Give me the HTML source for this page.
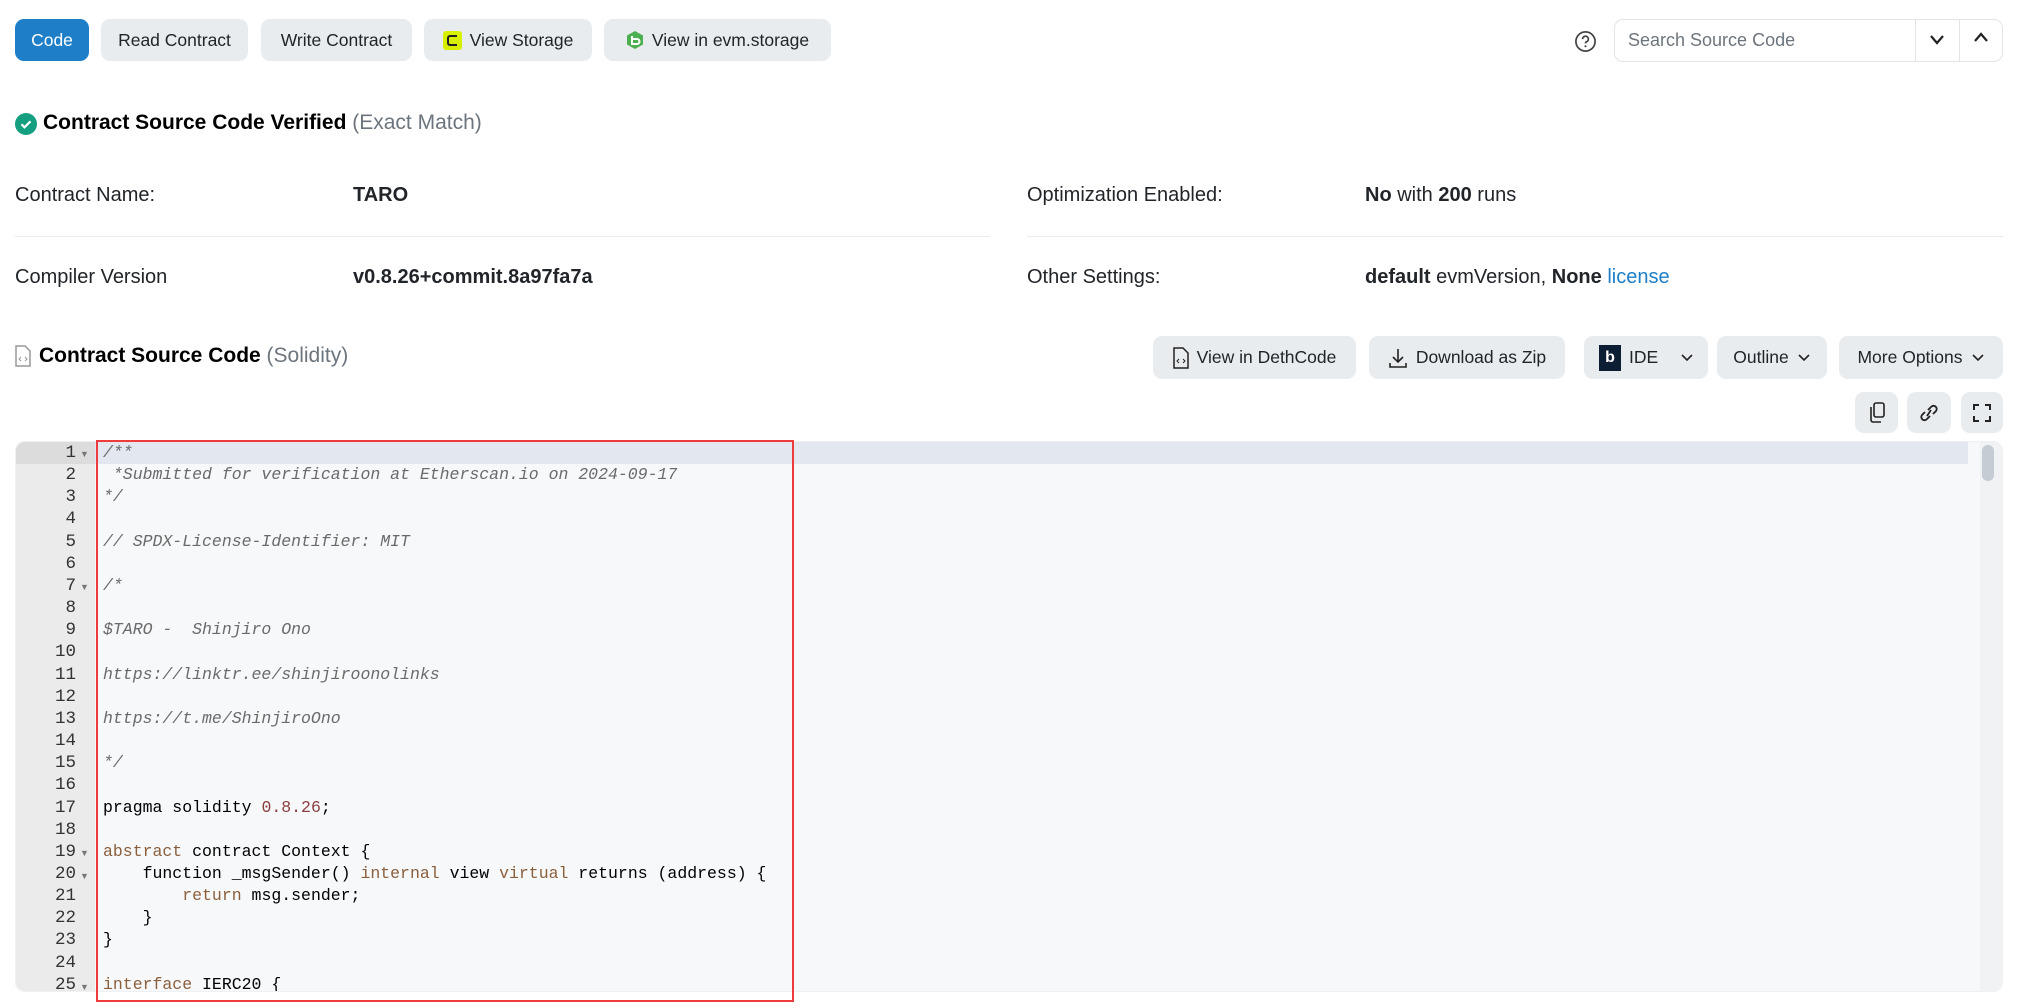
<!DOCTYPE html>
<html><head><meta charset="utf-8"><style>
*{box-sizing:border-box;margin:0;padding:0}
body{width:2017px;height:1008px;background:#fff;font-family:"Liberation Sans",sans-serif;color:#212529;position:relative;overflow:hidden}
.a{position:absolute}
.btn{position:absolute;background:#e9ecef;border-radius:9px;font-size:17.5px;display:flex;align-items:center;justify-content:center;gap:8px;color:#212529}
.lbl{position:absolute;font-size:20px;color:#212529}
.val{position:absolute;font-size:20px;font-weight:bold;color:#212529}
.hr{position:absolute;height:1px;background:#e9ecef}
.ed{position:absolute;left:15px;top:441px;width:1988px;height:551px;background:#f7f8fa;border-radius:10px;overflow:hidden;border:1px solid #eef0f3}
.gut{position:absolute;left:0;top:0;width:79px;height:100%;background:#ebebeb}
.ln{position:absolute;left:0;width:60px;text-align:right;font-family:"Liberation Mono",monospace;font-size:17.5px;color:#333;line-height:22.15px}
.code{position:absolute;left:87px;top:0;font-family:"Liberation Mono",monospace;font-size:16.5px;line-height:22.15px;white-space:pre;color:#000}
.c{color:#6a6a6a;font-style:italic}.k{color:#8b5e3c}.n{color:#8b3d3d}
.fold{position:absolute;left:64px;font-size:9px;color:#777}
</style></head><body>
<div class="btn" style="left:15px;top:19px;width:74px;height:42px;background:#1e7fc8;color:#fff">Code</div>
<div class="btn" style="left:101px;top:19px;width:147px;height:42px">Read Contract</div>
<div class="btn" style="left:261px;top:19px;width:151px;height:42px">Write Contract</div>
<div class="btn" style="left:424px;top:19px;width:168px;height:42px"><span style="display:inline-block;width:19px;height:19px;background:#d8f000;border-radius:3px;position:relative"><span style="position:absolute;left:4px;top:4px;width:10px;height:11px;border:2.5px solid #222;border-right:none;border-radius:3px 0 0 3px"></span></span>View Storage</div>
<div class="btn" style="left:604px;top:19px;width:227px;height:42px"><svg width="18" height="20" viewBox="0 0 18 20"><polygon points="9,1 17,5.5 17,14.5 9,19 1,14.5 1,5.5" fill="#4caf50"/><path d="M6 6v8h5a2.5 2.5 0 0 0 0-5H7" stroke="#fff" stroke-width="2" fill="none"/></svg>View in evm.storage</div>

<svg class="a" style="left:1574px;top:30px" width="23" height="23" viewBox="0 0 24 24"><circle cx="12" cy="12" r="10" fill="none" stroke="#444" stroke-width="1.8"/><path d="M9 9.5a3 3 0 1 1 4 2.8c-.8.4-1 1-1 1.7" fill="none" stroke="#444" stroke-width="1.8"/><circle cx="12" cy="17" r="1.1" fill="#444"/></svg>
<div class="a" style="left:1614px;top:19px;width:389px;height:43px;border:1px solid #e2e5e8;border-radius:9px"></div>
<div class="a" style="left:1628px;top:30px;font-size:18px;color:#6c757d">Search Source Code</div>
<div class="a" style="left:1915px;top:20px;width:1px;height:41px;background:#e2e5e8"></div>
<div class="a" style="left:1959px;top:20px;width:1px;height:41px;background:#e2e5e8"></div>
<svg class="a" style="left:1928px;top:33px" width="18" height="14"><path d="M3 3l6 7 6-7" stroke="#222" stroke-width="2.2" fill="none"/></svg>
<svg class="a" style="left:1972px;top:30px" width="18" height="14"><path d="M3 11l6-7 6 7" stroke="#222" stroke-width="2.2" fill="none"/></svg>

<svg class="a" style="left:15px;top:113px" width="22" height="22"><circle cx="11" cy="11" r="11" fill="#139f80"/><path d="M6.5 11.3l3 3 6-6" stroke="#fff" stroke-width="2.2" fill="none"/></svg>
<div class="a" style="left:43px;top:111px;font-size:21px;font-weight:bold;color:#000">Contract Source Code Verified <span style="font-weight:normal;color:#6c757d">(Exact Match)</span></div>

<div class="lbl" style="left:15px;top:184px">Contract Name:</div>
<div class="val" style="left:353px;top:184px">TARO</div>
<div class="lbl" style="left:1027px;top:184px">Optimization Enabled:</div>
<div class="val" style="left:1365px;top:184px">No <span style="font-weight:normal">with</span> 200 <span style="font-weight:normal">runs</span></div>
<div class="hr" style="left:15px;top:236px;width:975px"></div>
<div class="hr" style="left:1027px;top:236px;width:976px"></div>
<div class="lbl" style="left:15px;top:266px">Compiler Version</div>
<div class="val" style="left:353px;top:266px">v0.8.26+commit.8a97fa7a</div>
<div class="lbl" style="left:1027px;top:266px">Other Settings:</div>
<div class="val" style="left:1365px;top:266px">default <span style="font-weight:normal">evmVersion,</span> None <span style="font-weight:normal;color:#1e7fc8">license</span></div>

<svg class="a" style="left:15px;top:345px" width="16" height="22"><path d="M1 1h9l5 5v15H1z" fill="none" stroke="#999" stroke-width="1.5"/><path d="M6 12l-2 2 2 2M10 12l2 2-2 2" stroke="#999" fill="none"/></svg>
<div class="a" style="left:39px;top:344px;font-size:21px;font-weight:bold;color:#000">Contract Source Code <span style="font-weight:normal;color:#6c757d">(Solidity)</span></div>

<div class="btn" style="left:1153px;top:336px;width:203px;height:43px"><svg width="16" height="22"><path d="M1 1h9l5 5v15H1z" fill="none" stroke="#222" stroke-width="1.5"/><path d="M6 12l-2 2 2 2M10 12l2 2-2 2" stroke="#222" fill="none"/></svg>View in DethCode</div>
<div class="btn" style="left:1369px;top:336px;width:196px;height:43px"><svg width="20" height="22"><path d="M10 2v13M5 10l5 5 5-5M2 16v4h16v-4" stroke="#222" stroke-width="1.6" fill="none"/></svg>Download as Zip</div>
<div class="btn" style="left:1584px;top:336px;width:124px;height:43px;justify-content:flex-start;padding-left:15px"><span style="display:inline-block;width:22px;height:26px;background:#0c1e33;color:#fff;font-weight:bold;font-size:16px;text-align:center;line-height:26px">b</span>IDE<svg style="margin-left:14px" width="14" height="10"><path d="M2 2l5 5 5-5" stroke="#222" stroke-width="1.6" fill="none"/></svg></div>
<div class="btn" style="left:1717px;top:336px;width:110px;height:43px">Outline<svg width="14" height="10"><path d="M2 2l5 5 5-5" stroke="#222" stroke-width="1.6" fill="none"/></svg></div>
<div class="btn" style="left:1839px;top:336px;width:164px;height:43px">More Options<svg width="14" height="10"><path d="M2 2l5 5 5-5" stroke="#222" stroke-width="1.6" fill="none"/></svg></div>

<div class="btn" style="left:1855px;top:392px;width:43px;height:41px"><svg width="18" height="22"><rect x="6" y="1" width="10" height="14" rx="2" fill="none" stroke="#222" stroke-width="1.6"/><path d="M3 5v13a2 2 0 0 0 2 2h8" fill="none" stroke="#222" stroke-width="1.6"/></svg></div>
<div class="btn" style="left:1907px;top:392px;width:44px;height:41px"><svg width="24" height="20" viewBox="0 0 24 20"><path d="M10 13l4-6M8 9l-3 3a3 3 0 0 0 5 4l3-3M16 11l3-3a3 3 0 0 0-5-4l-3 3" fill="none" stroke="#222" stroke-width="1.8"/></svg></div>
<div class="btn" style="left:1961px;top:392px;width:42px;height:41px"><svg width="18" height="18"><path d="M1 6V1h5M12 1h5v5M17 12v5h-5M6 17H1v-5" fill="none" stroke="#222" stroke-width="2"/></svg></div>

<div class="ed">
<div class="a" style="left:0;top:0;width:1952px;height:22px;background:#e2e7f0"></div>
<div class="gut"></div>
<div class="a" style="left:0;top:0;width:79px;height:22px;background:#dcdcdc"></div>
<div class="a" style="left:1964px;top:0;width:22px;height:552px;background:#f1f2f4"></div>
<div class="a" style="left:1966px;top:3px;width:12px;height:36px;background:#c6ccd4;border-radius:6px"></div>
<div class="ln" style="top:0">1<br>2<br>3<br>4<br>5<br>6<br>7<br>8<br>9<br>10<br>11<br>12<br>13<br>14<br>15<br>16<br>17<br>18<br>19<br>20<br>21<br>22<br>23<br>24<br>25</div>
<div class="fold" style="top:7px">▼</div><div class="fold" style="top:140px">▼</div><div class="fold" style="top:406px">▼</div><div class="fold" style="top:429px">▼</div><div class="fold" style="top:540px">▼</div>
<div class="code"><span class="c">/**
 *Submitted for verification at Etherscan.io on 2024-09-17
*/</span>

<span class="c">// SPDX-License-Identifier: MIT</span>

<span class="c">/*

$TARO -  Shinjiro Ono

https://linktr.ee/shinjiroonolinks

https://t.me/ShinjiroOno

*/</span>

pragma solidity <span class="n">0.8.26</span>;

<span class="k">abstract</span> contract Context {
    function _msgSender() <span class="k">internal</span> view <span class="k">virtual</span> returns (address) {
        <span class="k">return</span> msg.sender;
    }
}

<span class="k">interface</span> IERC20 {</div>
</div>
<div class="a" style="left:96px;top:440px;width:698px;height:562px;border:2.5px solid #ef3b3b"></div>
</body></html>
